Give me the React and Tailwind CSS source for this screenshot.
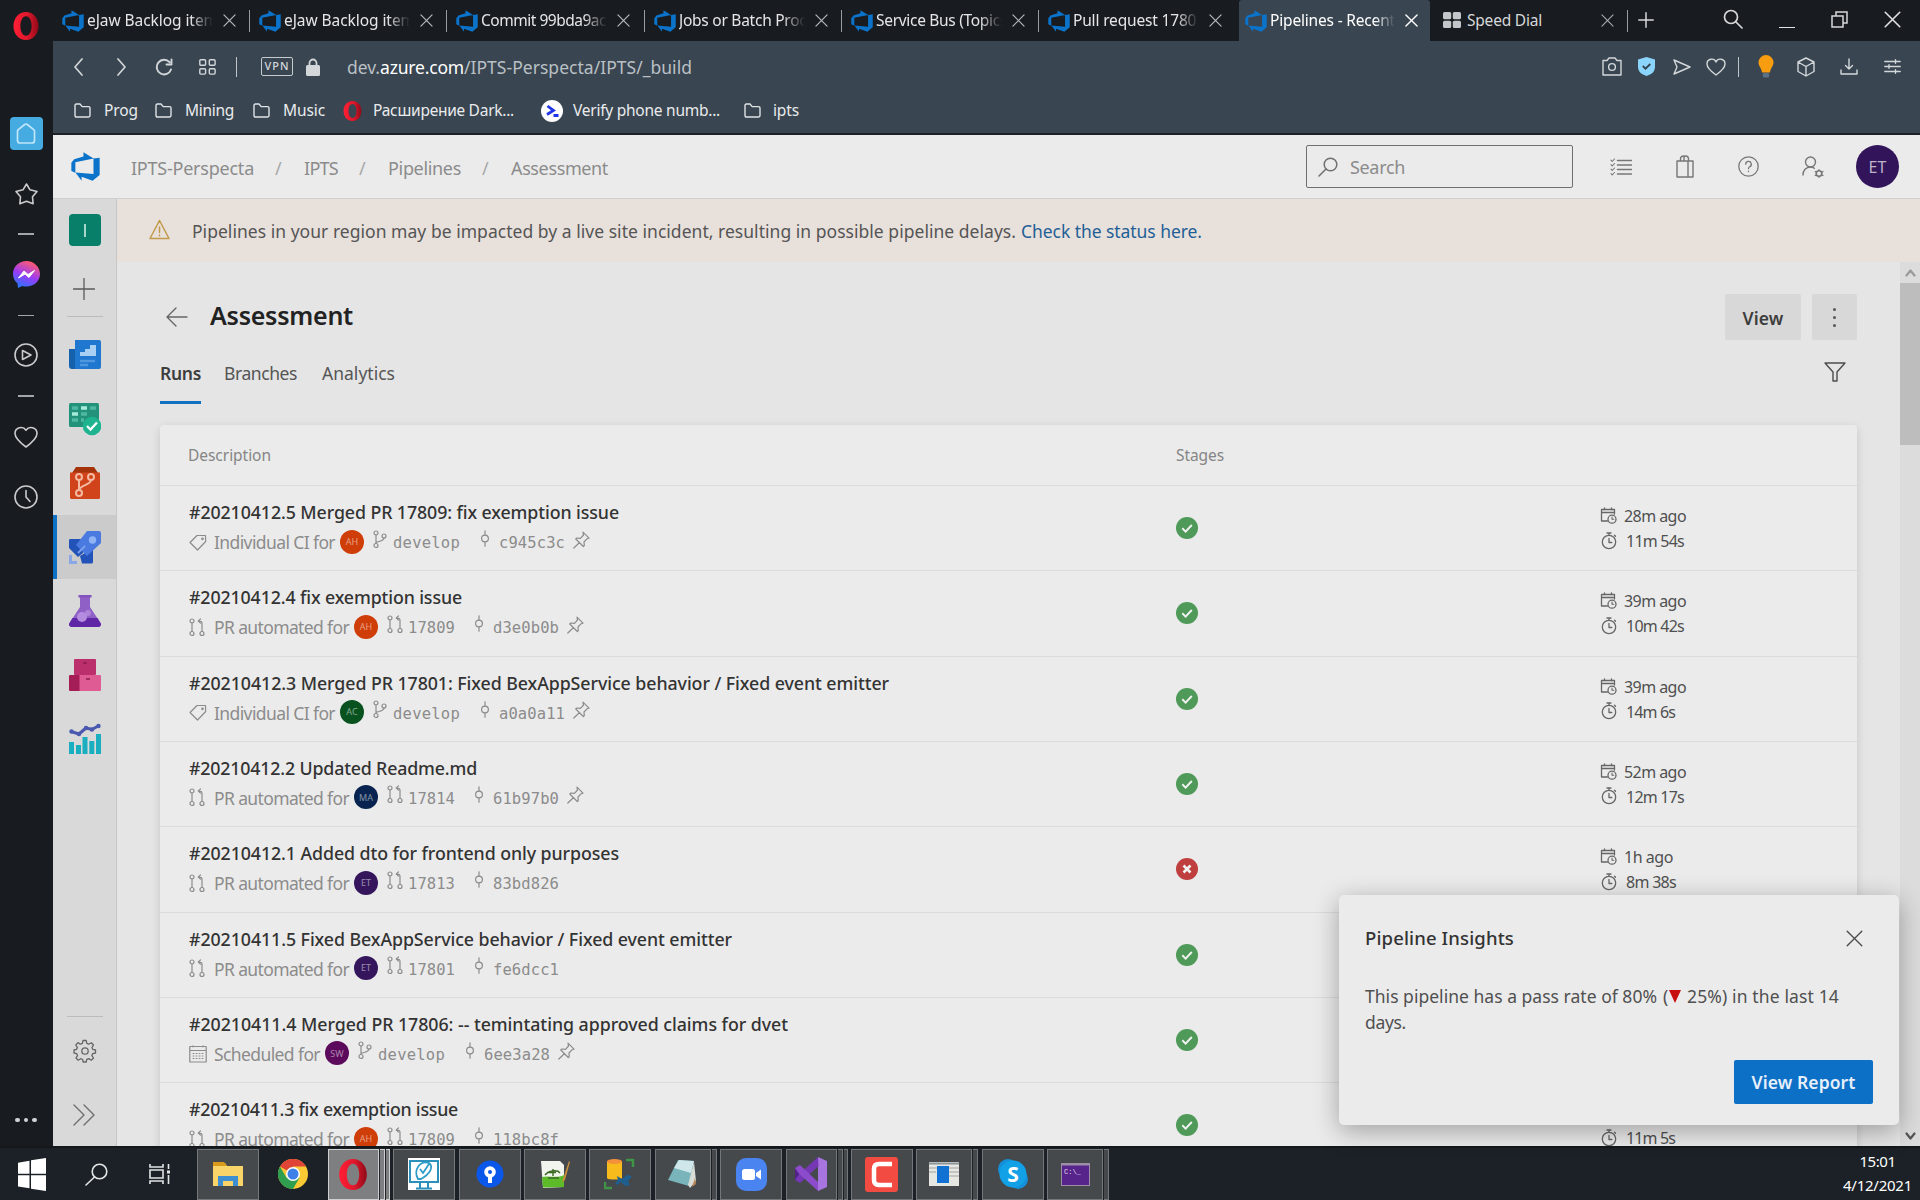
import React, { useLayoutEffect, useRef, useState } from "react";

const UI = "font-['Noto_Sans','Open_Sans',sans-serif]";

// Single-line text whose letter spacing is adjusted so that it fills `w` pixels.
function Fit({ w, className = "", children }) {
  const ref = useRef(null);
  const [ls, setLs] = useState(0);
  useLayoutEffect(() => {
    const el = ref.current;
    const natural = el.getBoundingClientRect().width - ls * children.length;
    setLs((w - natural) / children.length);
  }, [w, children]);
  return (
    <span className={"block shrink-0 whitespace-nowrap " + className} style={{ width: w }}>
      <span ref={ref} style={{ letterSpacing: ls }}>{children}</span>
    </span>
  );
}

function Icon({ size = 18, w, h, box = "0 0 24 24", sw = 1.5, className = "", children }) {
  return (
    <svg width={w || size} height={h || size} viewBox={box} fill="none" stroke="currentColor" strokeWidth={sw}
      strokeLinecap="round" strokeLinejoin="round" className={"block shrink-0 " + className}>
      {children}
    </svg>
  );
}

function DevOps({ size, className = "" }) {
  return (
    <svg width={size} height={size} viewBox="0.8 0.8 16.4 16.4" className={"block shrink-0 " + className}>
      <path fill="#0b73c9" d="M17,4v9.74l-4,3.28-6.2-2.26V17l-3.51-4.59,10.23.8V4.44Zm-3.41.49L7.85,1V3.29L2.58,4.84,1,6.87v4.61l2.26,1V6.57Z" />
    </svg>
  );
}

function OperaO({ w, h, className = "" }) {
  return (
    <svg width={w} height={h} viewBox="0 0 26 28" className={"block shrink-0 " + className}>
      <defs>
        <linearGradient id="opg" x1="0" x2="1"><stop offset="0" stopColor="#ff1f35" /><stop offset=".55" stopColor="#e0182c" /><stop offset="1" stopColor="#8e0a18" /></linearGradient>
      </defs>
      <path fill="url(#opg)" fillRule="evenodd" d="M13 0C5.800 0 .5 6 .5 14S5.800 28 13 28 25.500 22 25.500 14 20.200 0 13 0Zm0 4.200c3.600 0 5.600 4.600 5.600 9.800s-2 9.800-5.600 9.800S7.400 19.200 7.400 14 9.400 4.200 13 4.200Z" />
    </svg>
  );
}

function Cross({ size = 14, sw = 1.5, className = "" }) {
  return <Icon size={size} box="0 0 14 14" sw={sw} className={className}><path d="M1 1 13 13M13 1 1 13" /></Icon>;
}

function Folder() {
  return <Icon w={17} h={15} box="0 0 17 15" sw={1.4} className="text-[#dfe3e6]"><path d="M1 2.500C1 1.600 1.500 1 2.400 1H6l2.200 2.600h6.400c.9 0 1.400.5 1.400 1.400v7.600c0 .9-.5 1.400-1.400 1.400H2.400C1.500 14 1 13.500 1 12.600Z" /></Icon>;
}

const tabs = [
  ["eJaw Backlog item", 131, "w-[197px]"],
  ["eJaw Backlog item", 131, "w-[197px]"],
  ["Commit 99bda9ac", 125, "w-[198px]"],
  ["Jobs or Batch Proce", 136, "w-[197px]"],
  ["Service Bus (Topics", 131, "w-[197px]"],
  ["Pull request 17801", 132, "w-[200px]"],
];

function TabBar() {
  return (
    <div className="flex h-[41px] bg-[#181b1f]">
      {tabs.map(([label, w, width], i) => (
        <div key={i} className={"flex shrink-0 items-center pl-[9px] " + width}>
          <DevOps size={22} />
          <div className="ml-[3px] w-[126px] overflow-hidden [mask-image:linear-gradient(to_right,black_82%,transparent_100%)]">
            <Fit w={w} className="text-[15.500px] text-[#e4e6e8]">{label}</Fit>
          </div>
          <Cross size={13} sw={1.3} className="ml-[10px] text-[#b5b8bb]" />
          {i < 5 && <div className="ml-auto h-[22px] w-px bg-[#9a9da0]" />}
        </div>
      ))}
      <div className="flex w-[191px] shrink-0 items-center rounded-t-[3px] bg-[#394550] pl-[6px]">
        <DevOps size={22} />
        <div className="ml-[3px] w-[125px] overflow-hidden [mask-image:linear-gradient(to_right,black_84%,transparent_100%)]">
          <Fit w={125} className="text-[15.500px] text-white">Pipelines - Recent</Fit>
        </div>
        <Cross size={13} sw={1.5} className="ml-[10px] text-white" />
      </div>
      <div className="flex flex-1 items-center pl-[13px] text-[#d6d8da]">
        <svg width="18" height="16" viewBox="0 0 18 16" className="mb-[2px] block" fill="#c4c7c9"><rect width="8.200" height="7.200" rx="1.500" /><rect x="9.800" width="8.200" height="7.200" rx="1.500" /><rect y="8.800" width="8.200" height="7.200" rx="1.500" /><rect x="9.800" y="8.800" width="8.200" height="7.200" rx="1.500" /></svg>
        <Fit w={75} className="ml-[6px] text-[15.500px]">Speed Dial</Fit>
        <Cross size={13} sw={1.2} className="ml-[59px] text-[#a8abae]" />
        <div className="ml-[13px] h-[22px] w-px bg-[#9a9da0]" />
        <Icon size={16} box="0 0 16 16" sw={1.500} className="mb-[2px] ml-[10px]"><path d="M8 .8V15.200M.8 8H15.200" /></Icon>
        <Icon size={20} box="0 0 20 20" sw={1.700} className="mb-[4px] ml-[69px]"><circle cx="8" cy="8" r="6.500" /><path d="m13 13 6 6" /></Icon>
        <div className="mt-[14px] ml-[36px] h-[1.500px] w-[16px] bg-[#e0e2e4]" />
        <Icon size={17} box="0 0 17 17" sw={1.500} className="mb-[2px] ml-[36px]"><path strokeLinejoin="miter" d="M1 5H12V16H1ZM5 5V1H16V12H12" /></Icon>
        <Cross size={17} sw={1.300} className="mb-[2px] ml-[36px] text-[#e0e2e4]" />
      </div>
    </div>
  );
}

function AddressBar() {
  return (
    <div className="flex h-[51px] items-center pl-[20px] text-[#d3d7da]">
      <Icon w={11} h={18} box="0 0 11 18" sw={1.700}><path d="M9 1 2 9l7 8" /></Icon>
      <Icon w={11} h={18} box="0 0 11 18" sw={1.700} className="ml-[32px]"><path d="m2 1 7 8-7 8" /></Icon>
      <Icon size={18} box="0 0 18 18" sw={1.900} className="ml-[28px]"><path d="M16 11.500A7.300 7.300 0 1 1 14.500 4.200M16.500 1.500V6.500H11.500" /></Icon>
      <Icon w={17} h={16} box="0 0 17 16" sw={1.400} className="ml-[26px]"><rect x=".8" y=".8" width="5.800" height="5.400" rx="1" /><rect x="10.300" y=".8" width="5.800" height="5.400" rx="1" /><rect x=".8" y="9.700" width="5.800" height="5.400" rx="1" /><rect x="10.300" y="9.700" width="5.800" height="5.400" rx="1" /></Icon>
      <div className="ml-[20px] h-[20px] w-px bg-[#c0c5c9]" />
      <div className="ml-[24px] flex h-[19px] w-[32px] items-center justify-center rounded-[2px] border-[1.500px] border-[#c6cbce]">
        <Fit w={25} className="text-center text-[11px] font-medium">VPN</Fit>
      </div>
      <svg width="14" height="18" viewBox="0 0 14 18" className="ml-[13px] block"><rect y="7" width="14" height="11" rx="1.500" fill="#d3d7da" /><path d="M3.500 8V5a3.500 3.500 0 0 1 7 0v3" fill="none" stroke="#d3d7da" strokeWidth="1.800" /></svg>
      <div className="mt-[1px] ml-[27px] flex text-[17.500px] text-[#b9c0c5]">
        <Fit w={33}>dev.</Fit>
        <Fit w={84} className="text-white">azure.com</Fit>
        <Fit w={228}>/IPTS-Perspecta/IPTS/_build</Fit>
      </div>
      <div className="ml-auto flex items-center">
        <Icon w={20} h={19} box="0 0 20 19" sw={1.400}><path d="M1 3.500H5L7 1h6l2 2.500h4V18H1Z" /><circle cx="10" cy="10" r="3.400" /></Icon>
        <svg width="17" height="19" viewBox="0 0 17 19" className="ml-[16px] block"><path d="M8.500 0 17 2.500V10c0 4.500-3.500 7.500-8.500 9C3.500 17.500 0 14.500 0 10V2.500Z" fill="#8bd4fb" /><path d="m4.800 9 2.700 2.700L12.300 7" fill="none" stroke="#33424f" strokeWidth="1.800" /></svg>
        <Icon w={18} h={16} box="0 0 18 16" sw={1.400} className="ml-[18px]"><path d="M1 1 17 8 1 15 4 8Z" /></Icon>
        <Icon w={20} h={18} box="0 0 20 18" sw={1.400} className="ml-[15px]"><path d="M10 17C3 12 1 9 1 6a4.700 4.700 0 0 1 9-2 4.700 4.700 0 0 1 9 2c0 3-2 6-9 11Z" /></Icon>
        <div className="ml-[12px] h-[20px] w-px bg-[#c0c5c9]" />
        <svg width="16" height="24" viewBox="0 0 16 24" className="ml-[19px] block"><path d="M8 0a7.500 7.500 0 0 1 7.500 7.500c0 3.500-3 5.500-3.500 10H4c-.5-4.500-3.500-6.500-3.500-10A7.500 7.500 0 0 1 8 0Z" fill="#f79d0f" /><rect x="4.800" y="18" width="6.400" height="4.500" rx="1.500" fill="#5d7186" /></svg>
        <Icon w={18} h={20} box="0 0 18 20" sw={1.400} className="ml-[23px]"><path d="m9 1 8 4v9.500L9 19l-8-4.500V5ZM1 5l8 4.500L17 5M9 9.500V19" /></Icon>
        <Icon w={18} h={17} box="0 0 18 17" sw={1.400} className="ml-[25px]"><path d="M9 1v10M5.500 7.500 9 11l3.500-3.500M1 12v4h16v-4" /></Icon>
        <Icon w={17} h={15} box="0 0 17 15" sw={1.400} className="mr-[19px] ml-[26px]"><path d="M.8 2.500H16.200M.8 7.500H16.200M.8 12.500H16.200M11.500.8V4.200M5 5.800V9.200M11.500 10.800v3.400" /></Icon>
      </div>
    </div>
  );
}

function Bookmarks() {
  return (
    <div className="flex h-[43px] items-center border-b-2 border-[#1b2025] pb-[4px] pl-[21px] text-[15.500px] text-[#e9ebed]">
      <Folder /><Fit w={34} className="ml-[13px]">Prog</Fit>
      <div className="w-[17px]" /><Folder /><Fit w={49} className="ml-[13px]">Mining</Fit>
      <div className="w-[19px]" /><Folder /><Fit w={42} className="ml-[13px]">Music</Fit>
      <OperaO w={19} h={20} className="ml-[18px]" /><Fit w={141} className="ml-[11px]">Расширение Dark...</Fit>
      <svg width="22" height="22" viewBox="0 0 22 22" className="ml-[27px] block"><circle cx="11" cy="11" r="11" fill="#fff" /><path d="m6.500 6 6 4.500-6.500 4M12.500 15.500h5" fill="none" stroke="#1f35e8" strokeWidth="2.800" /></svg>
      <Fit w={147} className="ml-[10px]">Verify phone numb...</Fit>
      <div className="w-[24px]" /><Folder /><Fit w={26} className="ml-[12px]">ipts</Fit>
    </div>
  );
}

function OperaSidebar() {
  const dash = "h-[1.500px] w-[16px] bg-[#a4a7aa]";
  return (
    <div className="flex w-[53px] shrink-0 flex-col items-center bg-[#181b1f] pr-[1px] text-[#c9cbcd]">
      <OperaO w={26} h={28} className="mt-[12px]" />
      <div className="mt-[77px] flex size-[33px] items-center justify-center rounded-[4px] bg-[#45abe1] text-[#bfe6fa]">
        <Icon w={20} h={21} box="0 0 20 21" sw={1.700}><path d="M1.500 8.500Q1.500 7.500 2.300 6.700L8.700 1.500Q10 .5 11.300 1.500L17.700 6.700Q18.500 7.500 18.500 8.500V17.500Q18.500 20 16 20H4Q1.500 20 1.500 17.500Z" /></Icon>
      </div>
      <Icon w={23} h={22} box="0 0 23 22" sw={1.600} className="mt-[33px]"><path d="M11.500 1 15 6.800l7 1.700-4.500 5.300.6 7-6.600-2.600-6.600 2.600.6-7L1 8.500l7-1.700Z" /></Icon>
      <div className={dash + " mt-[28px]"} />
      <svg width="27" height="27" viewBox="0 0 27 27" className="mt-[26px] block">
        <defs><linearGradient id="msg" x1="0.200" y1="1" x2="0.600" y2="0"><stop offset="0" stopColor="#1f7bff" /><stop offset=".5" stopColor="#9a3bf5" /><stop offset="1" stopColor="#ff5b70" /></linearGradient></defs>
        <path d="M13.500 0C6 0 0 5.500 0 13c0 4 1.600 7 4.500 9.500L5 27l4.200-2c1.400.4 2.800.6 4.300.6C21 25.600 27 20 27 13S21 0 13.500 0Z" fill="url(#msg)" />
        <path d="m5.500 17 5.500-7 4 3.500 6.500-4-5.500 7-4-3.500Z" fill="#fff" stroke="#fff" />
      </svg>
      <div className={dash + " mt-[27px]"} />
      <Icon size={24} box="0 0 24 24" sw={1.600} className="mt-[27px]"><circle cx="12" cy="12" r="11" /><path d="M8.500 7.500 17 12l-8.500 4.500Z" /></Icon>
      <div className={dash + " mt-[28px]"} />
      <Icon w={24} h={22} box="0 0 24 22" sw={1.600} className="mt-[29px]"><path d="M12 21C4 15 1 11.500 1 7.500a6 6 0 0 1 11-3.300A6 6 0 0 1 23 7.500C23 11.500 20 15 12 21Z" /></Icon>
      <Icon size={24} box="0 0 24 24" sw={1.600} className="mt-[37px]"><circle cx="12" cy="12" r="11" /><path d="M12 5.500V12l4 4.500" /></Icon>
      <div className="mt-auto mb-[24px] flex gap-[4px]">
        <i className="size-[4.500px] rounded-full bg-[#d0d2d4]" /><i className="size-[4.500px] rounded-full bg-[#d0d2d4]" /><i className="size-[4.500px] rounded-full bg-[#d0d2d4]" />
      </div>
    </div>
  );
}

function Header() {
  return (
    <div className="flex h-[64px] shrink-0 items-center border-b border-[#cfcfcf] bg-[#ebebeb] pl-[18px] text-[18px] text-[#8b8b8b]">
      <DevOps size={29} />
      <div className="mt-[3px] ml-[31px] flex">
        <Fit w={123}>IPTS-Perspecta</Fit>
        <span className="ml-[21px] w-[29px] text-[#a8a8a8]">/</span>
        <Fit w={34}>IPTS</Fit>
        <span className="ml-[21px] w-[29px] text-[#a8a8a8]">/</span>
        <Fit w={73}>Pipelines</Fit>
        <span className="ml-[21px] w-[29px] text-[#a8a8a8]">/</span>
        <Fit w={97}>Assessment</Fit>
      </div>
      <div className="ml-auto flex h-[43px] w-[267px] items-center rounded-[2px] border-[1.500px] border-[#6f6f6f] pl-[11px]">
        <Icon size={20} box="0 0 20 20" sw={1.500} className="text-[#6f6f6f]"><circle cx="12.500" cy="7.500" r="6.300" /><path d="M8 12 1 19" /></Icon>
        <Fit w={55} className="mt-[2px] ml-[12px]">Search</Fit>
      </div>
      <Icon w={22} h={18} box="0 0 22 18" sw={1.500} className="ml-[37px] text-[#777]"><path d="M7.500 2.500h14M7.500 7h14M7.500 11.500h14M7.500 16h14" /><path strokeWidth="1.100" d="m1 2.200 1.200 1.300L4.500 1M1 6.700 2.200 8l2.300-2.500M1 11.200l1.200 1.300L4.500 10M1 15.700 2.200 17l2.300-2.500" /></Icon>
      <Icon w={18} h={23} box="0 0 18 23" sw={1.400} className="ml-[44px] text-[#777]"><path d="M1 6h16v16H1ZM12 6v16M4.500 6V4Q4.500 1 8 1M8 6V3.500Q8 1 10 1T12.500 3.500V6" /></Icon>
      <Icon size={21} box="0 0 21 21" sw={1.300} className="ml-[44px] text-[#777]"><circle cx="10.500" cy="10.500" r="9.700" /><path d="M7.700 8.200a2.800 2.800 0 1 1 4 2.500c-.9.500-1.200 1-1.200 2M10.500 15.200v.3" /></Icon>
      <Icon w={22} h={22} box="0 0 22 22" sw={1.400} className="ml-[43px] text-[#777]"><circle cx="8.500" cy="6" r="5" /><path d="M1 19c0-4.500 3-8 7.500-8 1.500 0 2.800.4 3.800 1.200" /><circle cx="17" cy="17.500" r="2.800" strokeWidth="1.600" /><path strokeWidth="1.200" d="M17 13.500v1M17 20.500v1M13.200 15.500l1 .5M20 19l1 .5M13.200 19.500l1-.5M20 16l1-.5" /></Icon>
      <div className="mr-[21px] ml-[32px] flex size-[43px] items-center justify-center rounded-full bg-[#32145a] text-[#bdb3ca]">
        <Fit w={18} className="text-[16px]">ET</Fit>
      </div>
    </div>
  );
}

const navIcons = [
  <g key="o"><path d="M0 10h8v20H3a3 3 0 0 1-3-3Z" fill="#1661ab" /><path d="M6 1h24a2 2 0 0 1 2 2v25a2 2 0 0 1-2 2H6Z" fill="#1f77cf" /><path d="M11 17V13h5v-3h5V6h6v11Z" fill="#a9d0f2" /><path d="M11 22h15M11 26h8" stroke="#4f97de" strokeWidth="2.500" /></g>,
  <g key="b"><rect x="0" y="0" width="30" height="24" rx="1.500" fill="#23927b" /><path d="M3 5h6M21 5h6M3 17h6M12 11h6M12 17h3" stroke="#4fb8a2" strokeWidth="3.500" /><path d="M12 5h6M3 11h6" stroke="#a6ead9" strokeWidth="3.500" /><circle cx="23" cy="23" r="9.300" fill="#1fb48f" /><path d="m18 23 3.500 3.500L28 19.500" stroke="#fff" strokeWidth="2.300" fill="none" /></g>,
  <g key="r"><path d="M7 0h18l4 6H3Z" fill="#a5330a" /><path d="M1 5.500h30V30.500a1.500 1.500 0 0 1-1.500 1.500h-27A1.500 1.500 0 0 1 1 30.500Z" fill="#d0431b" /><g fill="none" stroke="#f3b9a1" strokeWidth="2"><circle cx="10" cy="10" r="3" /><circle cx="22" cy="10" r="3" /><circle cx="10" cy="26" r="3" /><path d="M10 13v10M22 13c0 5-11 5-12 10" /></g></g>,
  <g key="p"><path d="M1 8h13v14l-5 4-9-9V9.500A1.500 1.500 0 0 1 1 8ZM24 17v14a1.500 1.500 0 0 1-1.500 1.500H13L11 25Z" fill="#2353b8" /><path d="M18 0h12a2 2 0 0 1 2 2v10L18 25 7 14Z" fill="#4a7ae0" /><circle cx="23.500" cy="9" r="3.700" fill="#8fb3f5" /><path d="m9 22 7-7" stroke="#7da1ee" strokeWidth="1.800" /><path d="m2 20 9 9-3 .5-6-6Z" fill="#cbcbcb" /><path d="M1.500 24v7.500H8" stroke="#8aa8e8" strokeWidth="3" fill="none" /></g>,
  <g key="t"><path d="M11 2h10v10l10.500 16a2.500 2.500 0 0 1-2 4H2.500a2.500 2.500 0 0 1-2-4L11 12Z" fill="#8f60c6" /><path d="M3.500 23h25l3 5a2.500 2.500 0 0 1-2 4H2.500a2.500 2.500 0 0 1-2-4Z" fill="#5f26a6" /><path d="M9.500 0h13v2.500h-13Z" fill="#8353bd" /><circle cx="13" cy="22" r="5" fill="#b58de0" /><circle cx="19" cy="18" r="3" fill="#b58de0" opacity=".8" /></g>,
  <g key="a"><rect x="5" y="0" width="22" height="16" rx="1" fill="#bb2f6d" /><path d="M0 17a1 1 0 0 1 1-1h10v16H1a1 1 0 0 1-1-1Z" fill="#a51d57" /><path d="M10.500 16H31a1 1 0 0 1 1 1v14a1 1 0 0 1-1 1H10.500Z" fill="#df5b94" /><path d="M14 4h4M17 20h4" stroke="#8f1c4d" strokeWidth="1.600" /></g>,
  <g key="n"><path d="m2 8.500 8 2.500 7-6 6 1.500L30 2.500" stroke="#4a58b0" strokeWidth="3" fill="none" /><g fill="#4a58b0"><circle cx="2.500" cy="8.500" r="2.200" /><circle cx="10" cy="11" r="2.200" /><circle cx="17" cy="5" r="2.200" /><circle cx="23" cy="6.500" r="2.200" /><circle cx="29.500" cy="3" r="2.200" /></g><path d="M0 19h5v12H0ZM7 22h5v9H7ZM13.500 14h5v17h-5ZM20.300 18h5v13h-5ZM27 11h5v20h-5Z" fill="#1aafc0" /></g>,
];

function LeftNav() {
  return (
    <div className="flex w-[64px] shrink-0 flex-col border-r border-[#c6c6c6] bg-[#d9d9d9]">
      <div className="mt-[15px] ml-[16px] flex size-[32px] items-center justify-center rounded-[4px] bg-[#087f68]">
        <div className="h-[13px] w-[1.500px] bg-[#a7d6cb]" />
      </div>
      <Icon size={22} box="0 0 22 22" sw={1.300} className="mt-[32px] ml-[20px] text-[#5a5a5a]"><path d="M11 .5v21M.5 11h21" /></Icon>
      <div className="mt-[16px] ml-[14px] h-px w-[36px] bg-[#bcbcbc]" />
      <div className="mt-[6px] flex flex-col">
        {navIcons.map((icon, i) => (
          <div key={i} className={"flex h-[64px] items-center " + (i === 3 ? "border-l-4 border-[#0e72c4] bg-[#cbcbcb] pl-[12px]" : "pl-[16px]")}>
            <svg width="32" height="33" viewBox="0 0 32 33" className="block">{icon}</svg>
          </div>
        ))}
      </div>
      <div className="mt-auto ml-[14px] h-px w-[36px] bg-[#bcbcbc]" />
      <Icon size={24} box="0 0 24 24" sw={1.300} className="mt-[22px] ml-[20px] text-[#666]"><circle cx="12" cy="12" r="3.200" /><path d="m10 1.500-.6 2.900-2 .8L5 3.600 2.800 6l1.500 2.400-.8 2-2.500.6v3l2.700.6.8 2L3 19l2.200 2.200 2.400-1.500 2 .8.600 2.500h3l.6-2.600 2-.8 2.500 1.600 2.200-2.200-1.600-2.400.8-2L22.500 14v-3l-2.700-.6-.8-2L20.500 6l-2.200-2.300-2.500 1.500-2-.8-.6-2.900Z" /></Icon>
      <Icon w={22} h={22} box="0 0 22 22" sw={1.400} className="mt-[41px] mb-[20px] ml-[20px] text-[#6f6f6f]"><path d="m1 1 10 10L1 21M11 1l10 10-10 10" /></Icon>
    </div>
  );
}

const glyphs = {
  tag: <Icon w={18} h={17} box="0 0 18 17" sw={1.200}><path d="M1 8.500 8 1.500h8.500l.2 6L8.500 16Z" /><circle cx="13.500" cy="4.800" r=".8" /></Icon>,
  pr: <Icon w={16} h={19} box="0 0 16 19" sw={1.200}><circle cx="3" cy="3" r="2" /><circle cx="3" cy="15.500" r="2" /><circle cx="13" cy="15.500" r="2" /><path d="M3 5v8.500M13 13.500V5.500c0-1.800-1-2.500-3.500-2.500M11.500.8 9.300 3l2.200 2.200" /></Icon>,
  branch: <Icon w={14} h={19} box="0 0 14 19" sw={1.200}><circle cx="3" cy="3" r="2" /><circle cx="3" cy="15.500" r="2" /><circle cx="11" cy="6" r="2" /><path d="M3 5v8.500M11 8c0 3-4 3-8 4.500" /></Icon>,
  commit: <Icon w={10} h={17} box="0 0 10 17" sw={1.200}><path d="M5 .8V5M5 12v4.200" /><circle cx="5" cy="8.500" r="3.400" /></Icon>,
  pin: <Icon w={17} h={18} box="0 0 17 18" sw={1.200}><path d="m10 1.200 6 6-2 .6-3 3.200.3 3.500-1 1L2.800 8l1-1 3.700.3L10.500 4ZM6.300 11.700.8 17" /></Icon>,
  calendar: <Icon w={18} h={18} box="0 0 18 18" sw={1.200}><path d="M.8 1.500h16.400V17H.8ZM.8 5.500h16.400M4 .8v1M14 .8v1" /><path strokeWidth="1" strokeDasharray="1 2" d="M4 8.500h11M4 11h11M4 13.500h11" /></Icon>,
};

const CI = ["tag", "Individual CI for", 121];
const PR = ["pr", "PR automated for", 135];
const AH = ["AH", "bg-[#cf3d08]"];
const ET = ["ET", "bg-[#35165c]"];

const runs = [
  { title: "#20210412.5 Merged PR 17809: fix exemption issue", w: 430, kind: CI, who: AH, ref: "develop", hash: "c945c3c", pin: true, ago: ["28m ago", 62], took: ["11m 54s", 58] },
  { title: "#20210412.4 fix exemption issue", w: 273, kind: PR, who: AH, ref: "17809", hash: "d3e0b0b", pin: true, ago: ["39m ago", 62], took: ["10m 42s", 58] },
  { title: "#20210412.3 Merged PR 17801: Fixed BexAppService behavior / Fixed event emitter", w: 700, kind: CI, who: ["AC", "bg-[#07521f]"], ref: "develop", hash: "a0a0a11", pin: true, ago: ["39m ago", 62], took: ["14m 6s", 49] },
  { title: "#20210412.2 Updated Readme.md", w: 288, kind: PR, who: ["MA", "bg-[#08234f]"], ref: "17814", hash: "61b97b0", pin: true, ago: ["52m ago", 62], took: ["12m 17s", 58] },
  { title: "#20210412.1 Added dto for frontend only purposes", w: 430, kind: PR, who: ET, ref: "17813", hash: "83bd826", fail: true, ago: ["1h ago", 49], took: ["8m 38s", 50] },
  { title: "#20210411.5 Fixed BexAppService behavior / Fixed event emitter", w: 543, kind: PR, who: ET, ref: "17801", hash: "fe6dcc1", ago: ["1h ago", 49], took: ["9m 12s", 50] },
  { title: "#20210411.4 Merged PR 17806: -- temintating approved claims for dvet", w: 599, kind: ["calendar", "Scheduled for", 106], who: ["SW", "bg-[#5c0a5c]"], ref: "develop", hash: "6ee3a28", pin: true, ago: ["9h ago", 49], took: ["12m 3s", 49] },
  { title: "#20210411.3 fix exemption issue", w: 269, kind: PR, who: AH, ref: "17809", hash: "118bc8f", ago: ["21h ago", 56], took: ["11m 5s", 49] },
];

function RunRow({ run, last }) {
  const mono = "font-['DejaVu_Sans_Mono',monospace] text-[15.500px] leading-[24px]";
  const branch = run.ref === "develop";
  return (
    <div className={"flex h-[85.330px] shrink-0 pl-[29px] " + (last ? "" : "border-b-[1.500px] border-[#dbdbdb]")}>
      <div className="w-[987px] shrink-0 pt-[14px]">
        <Fit w={run.w} className="text-[17.800px] leading-[24px] font-medium text-[#333]">{run.title}</Fit>
        <div className="mt-[6px] flex h-[24px] items-center text-[#8c8c8c]">
          <div className="w-[18px]">{glyphs[run.kind[0]]}</div>
          <Fit w={run.kind[2]} className="ml-[7px] text-[17.500px] leading-[24px]">{run.kind[1]}</Fit>
          <div className={"mb-[1px] ml-[5px] flex size-[24px] shrink-0 items-center justify-center rounded-full text-[9px] text-white/50 " + run.who[1]}>{run.who[0]}</div>
          <div className="mb-[6px] ml-[9px]">{branch ? glyphs.branch : glyphs.pr}</div>
          <Fit w={branch ? 67 : 47} className={"mt-[2px] " + (branch ? "ml-[6px] " : "ml-[5px] ") + mono}>{run.ref}</Fit>
          <div className={"mb-[7px] " + (branch ? "ml-[20px]" : "ml-[19px]")}>{glyphs.commit}</div>
          <Fit w={66} className={"mt-[2px] ml-[9px] " + mono}>{run.hash}</Fit>
          {run.pin && <div className="mb-[5px] ml-[8px]">{glyphs.pin}</div>}
        </div>
      </div>
      <svg width="22" height="22" viewBox="0 0 22 22" className="mt-[31px] block shrink-0">
        <circle cx="11" cy="11" r="11" fill={run.fail ? "#bf3f3f" : "#4f9a58"} />
        <path d={run.fail ? "m7.500 7.500 7 7m0-7-7 7" : "m6.300 11.300 3.300 3.300 6.200-6.600"} fill="none" stroke="#f2f2f2" strokeWidth={run.fail ? 2.600 : 2} />
      </svg>
      <div className="ml-[402px] pt-[18px] text-[16px] leading-[25px] text-[#505050]">
        <div className="flex h-[25px] items-center">
          <Icon size={17} box="0 0 17 17" sw={1.300} className="mb-[2px] text-[#666]"><path d="M7.500 14H1.500V2.500h13V7M1.500 5.500h13M4.500.8v2M11.500.8v2" /><circle cx="12" cy="12.200" r="4" /><path strokeWidth="1.100" d="M12 10v2.300h1.800" /></Icon>
          <Fit w={run.ago[1]} className="ml-[7px]">{run.ago[0]}</Fit>
        </div>
        <div className="flex h-[25px] items-center">
          <Icon w={16} h={18} box="0 0 16 18" sw={1.300} className="mb-[2px] ml-[1px] text-[#666]"><circle cx="8" cy="10" r="6.700" /><path d="M8 6.500V10.500h2.800M6 1h4M8 1v2M13.500 3.200l1 1" /></Icon>
          <Fit w={run.took[1]} className="ml-[9px]">{run.took[0]}</Fit>
        </div>
      </div>
    </div>
  );
}

function Main() {
  return (
    <div className="flex min-w-0 flex-1 flex-col bg-[#e5e5e5]">
      <div className="flex h-[63px] shrink-0 items-center bg-[#e8e0db] pl-[32px] text-[17.500px]">
        <Icon size={21} box="0 0 21 21" sw={1.500} className="mb-[2px] text-[#c29a4b]"><path d="M10.500 1.500 20 19.500H1ZM10.500 8v5.500M10.500 16v.8" /></Icon>
        <Fit w={824} className="mt-[1px] ml-[22px] text-[#555]">Pipelines in your region may be impacted by a live site incident, resulting in possible pipeline delays.</Fit>
        <Fit w={181} className="mt-[1px] ml-[5px] text-[#1f5f96]">Check the status here.</Fit>
      </div>
      <div className="flex h-[884px] shrink-0">
        <div className="flex flex-1 flex-col overflow-hidden pl-[43px]">
          <div className="mt-[32px] flex h-[46px] items-center pr-[43px]">
            <Icon w={22} h={20} box="0 0 22 20" sw={1.400} className="ml-[6px] text-[#666]"><path d="M21 10H1M10 1 1 10l9 9" /></Icon>
            <Fit w={143} className="mb-[4px] ml-[22px] text-[25px] leading-none font-semibold text-[#222]">Assessment</Fit>
            <div className="ml-auto flex h-[46px] w-[76px] items-center justify-center rounded-[2px] bg-[#d8d8d8]">
              <Fit w={41} className="mt-[3px] text-[17.500px] font-semibold text-[#3d3d3d]">View</Fit>
            </div>
            <div className="ml-[11px] flex h-[46px] w-[45px] flex-col items-center justify-center gap-[5px] rounded-[2px] bg-[#d8d8d8]">
              <i className="size-[3px] rounded-full bg-[#555]" /><i className="size-[3px] rounded-full bg-[#555]" /><i className="size-[3px] rounded-full bg-[#555]" />
            </div>
          </div>
          <div className="mt-[16px] flex h-[48px] text-[17.500px] leading-[34px] text-[#555]">
            <div className="flex h-[48px] w-[41px] flex-col justify-between border-b-[3px] border-[#1271c0] font-semibold text-[#3d3d3d]"><Fit w={41}>Runs</Fit></div>
            <Fit w={73} className="ml-[23px]">Branches</Fit>
            <Fit w={73} className="ml-[25px]">Analytics</Fit>
            <Icon w={22} h={20} box="0 0 22 20" sw={1.400} className="mt-[6px] mr-[54px] ml-auto text-[#4c4c4c]"><path d="M1 1h20l-8 9v9H9v-9Z" /></Icon>
          </div>
          <div className="mt-[21px] flex w-[1697px] shrink-0 flex-col rounded-t-[4px] bg-[#ebebeb] shadow-[0_3px_10px_rgba(0,0,0,0.14)]">
            <div className="flex h-[61px] shrink-0 items-center border-b-[1.500px] border-[#dbdbdb] pt-[1px] pl-[28px] text-[15.500px] text-[#858585]">
              <Fit w={83}>Description</Fit>
              <Fit w={48} className="ml-[905px]">Stages</Fit>
            </div>
            {runs.map((run, i) => <RunRow key={i} run={run} last={i === 7} />)}
          </div>
        </div>
        <div className="flex w-[20px] shrink-0 flex-col items-center justify-between bg-[#dcdcdc] text-[#9a9a9a]">
          <div>
            <div className="flex h-[21px] w-[20px] items-center justify-center"><Icon w={11} h={8} box="0 0 11 8" sw={2.200}><path d="m1.500 6.500 4-5 4 5" /></Icon></div>
            <div className="h-[162px] w-[20px] bg-[#bdbdbd]" />
          </div>
          <div className="flex h-[20px] items-center text-[#555]"><Icon w={11} h={8} box="0 0 11 8" sw={2.200}><path d="m1.500 1.500 4 5 4-5" /></Icon></div>
        </div>
      </div>
    </div>
  );
}

function Insights() {
  return (
    <div className="absolute top-[895px] left-[1339px] flex h-[230px] w-[560px] flex-col rounded-[5px] bg-[#ebebeb] px-[26px] shadow-[0_6px_26px_rgba(0,0,0,0.32)]">
      <div className="mt-[29px] flex h-[28px] items-center justify-between">
        <Fit w={149} className="text-[18.500px] font-medium text-[#333]">Pipeline Insights</Fit>
        <Cross size={17} sw={1.100} className="mr-[10px] text-[#4a4a4a]" />
      </div>
      <div className="mt-[32px] text-[17.500px] leading-[25.500px] text-[#505050]">
        <div className="flex items-center">
          <Fit w={292}>This pipeline has a pass rate of 80%</Fit>
          <Fit w={6} className="ml-[6px]">(</Fit>
          <svg width="12" height="13" viewBox="0 0 12 13" className="block"><path d="M0 0h12L6 13Z" fill="#c80f0f" /></svg>
          <Fit w={152} className="ml-[6px]">25%) in the last 14</Fit>
        </div>
        <Fit w={41}>days.</Fit>
      </div>
      <div className="mt-auto mb-[21px] flex h-[44px] w-[139px] items-center justify-center self-end rounded-[2px] bg-[#0c70c6]">
        <Fit w={104} className="mt-[1px] text-[17.500px] font-semibold text-[#e6effa]">View Report</Fit>
      </div>
    </div>
  );
}

function Task({ stack = 0, active, children }) {
  const tone = active ? "border-[#cfcfcf] bg-[#7d7f80]" : "border-[#73777a] bg-[#45494c]";
  return (
    <div className="flex w-[65.400px] shrink-0">
      <div className="flex w-[62px]">
        <div className={"flex h-[51px] flex-1 items-center justify-center border " + tone}>{children}</div>
        {stack > 0 && <div className={"ml-[1px] h-[51px] w-[5px] border border-l-0 " + tone} />}
        {stack > 1 && <div className={"ml-[1px] h-[51px] w-[4px] border border-l-0 " + tone} />}
      </div>
    </div>
  );
}

function Pic({ w = 32, h = 32, box = "0 0 32 32", children }) {
  return <svg width={w} height={h} viewBox={box} fill="none" className="block shrink-0">{children}</svg>;
}

function Taskbar() {
  return (
    <div className="flex h-[54px] shrink-0 items-center border-t-2 border-[#14181b] bg-[#1b2126]">
      <svg width="28" height="33" viewBox="0 0 28 28" preserveAspectRatio="none" className="ml-[18px] block" fill="#fff"><path d="M0 4 11.500 2.300V13.300H0ZM13 2 28 0v13.300H13ZM0 14.700h11.500v11L0 24.200ZM13 14.700h15V28l-15-2Z" /></svg>
      <Icon size={23} box="0 0 23 23" sw={1.600} className="ml-[39px] text-[#e3e5e6]"><circle cx="14.500" cy="8.500" r="7.300" /><path d="M9.500 14 1 22" /></Icon>
      <Icon w={22} h={22} box="0 0 22 22" sw={1.600} className="ml-[41px] text-[#e3e5e6]"><path strokeLinecap="butt" strokeLinejoin="miter" d="M1 1v3h13V1M1 7h13v8H1ZM1 21v-3h13v3M19.500 1v5M19.500 12v9" /><rect x="18" y="7.500" width="3" height="3" fill="currentColor" stroke="none" /></Icon>
      <div className="ml-[26px] flex items-center">
        <Task>
          <Pic><path d="M1 5h12l2 3h16v20H1Z" fill="#f9d468" /><path d="M1 4h11l3 4H1Z" fill="#d99a1b" /><path d="M6 28V18h20v10h-5v-5H11v5Z" fill="#3d8fd1" /></Pic>
        </Task>
        <div className="flex w-[65.400px] items-center justify-center pr-[4px]">
          <Pic w={30} h={30} box="0 0 30 30"><circle cx="15" cy="15" r="15" fill="#fbc934" /><path d="M15 15 2 7.500A15 15 0 0 1 28 7.500H15Z" fill="#df4436" /><path d="M2 7.500A15 15 0 0 0 15 30l6.500-11.300L15 15l-6.500 3.700Z" fill="#2f9e4f" /><circle cx="15" cy="15" r="7" fill="#fff" /><circle cx="15" cy="15" r="5.500" fill="#3f7fe8" /></Pic>
        </div>
        <Task stack={2} active><OperaO w={30} h={31} /></Task>
        <Task>
          <Pic><rect width="32" height="32" fill="#fff" /><path d="M2 3h28v21H2ZM12 24v6M20 24v6M8 30.500h16" stroke="#2b91bb" strokeWidth="2" /><path d="M10 21C5 12 12 2 21 5c5 4 1 11-8 16ZM12 11l3 4 6-9" stroke="#2f9cc8" strokeWidth="1.800" /></Pic>
        </Task>
        <Task>
          <Pic><circle cx="16" cy="16" r="13.500" fill="#0b57ea" /><circle cx="16" cy="14" r="5.800" fill="#fff" /><circle cx="16" cy="14" r="2" fill="#0b57ea" /><path d="M14 17h4v8h-4Z" fill="#fff" /></Pic>
        </Task>
        <Task>
          <Pic><path d="M2 3h19l4 4v22L4 30Z" fill="#f2f5ee" /><path d="M3 19c7-2 14 2 22-2v12L4 29.500Z" fill="#5dbb2a" /><path d="M6 17c3-4 12-6 15-2M8 14.500h9M14 11v7M9 20h11" stroke="#3b6b23" strokeWidth="1.400" /><path d="M30 3 24 21l-1 4 3-3 5-18Z" fill="#c78e3b" /></Pic>
        </Task>
        <Task>
          <Pic><path d="M3 3v17c0 2 15 2 15 0V3Z" fill="#f7bb1c" /><ellipse cx="10.500" cy="3.500" rx="7.500" ry="2.500" fill="#f3913b" /><path d="m13 18 5 3 5-4 5 1-4 5 2 4-5 1-4-4-4 3-2-2 3-3Z" fill="#1f5f8f" /><path d="M22 2h7v7M1 24v6h7" stroke="#3f9446" strokeWidth="2.500" /></Pic>
        </Task>
        <Task stack={1}>
          <Pic><path d="M11 2 27 3l-5 25L1 22Z" fill="#79b4ba" /><path d="M12 2 27 3l-3 12L7 10Z" fill="#cfe7ea" /><path d="m27 4 2 19-6 7-2-3Z" fill="#d8dcd6" /><path d="m28 20 1 6-4 3Z" fill="#b88755" /></Pic>
        </Task>
        <Task>
          <Pic w={31} h={33} box="0 0 31 33"><rect width="31" height="33" rx="10" fill="#4a84f0" /><rect x="6" y="11" width="13" height="11" rx="2.500" fill="#fff" /><path d="m20 15 5-3.500v10L20 18Z" fill="#fff" /></Pic>
        </Task>
        <Task stack={2}>
          <Pic w={32} h={34} box="0 0 32 34"><path d="M23 0 32 4v26l-9 4Z" fill="#a774e0" /><path d="m23 0 .5 9L5 26l-5-3v-2Z" fill="#7637b5" /><path d="M0 11 5 8l18 17v9L0 13Z" fill="#8b4bcb" /><path d="M0 11v12l4-6Z" fill="#52218a" /></Pic>
        </Task>
        <Task>
          <Pic w={33} h={35} box="0 0 33 35"><rect width="33" height="35" rx="3" fill="#f24b41" /><path d="M27 7H14Q9 7 9 12v11q0 5 5 5h13" stroke="#fff" strokeWidth="4.500" /></Pic>
        </Task>
        <Task stack={1}>
          <Pic w={30} h={24} box="0 0 30 24"><rect width="30" height="24" fill="#e6e6e2" /><path d="M0 1.500h30" stroke="#8b9298" strokeWidth="2" /><path d="M0 6h30M20 10h10M20 14h10M0 10h7" stroke="#b9b9b9" strokeWidth="1.500" /><rect x="8" y="4" width="12" height="17" fill="#1272d4" /></Pic>
        </Task>
        <Task>
          <Pic><circle cx="11" cy="11" r="10" fill="#1490d8" /><circle cx="21" cy="21" r="10" fill="#1490d8" /><circle cx="16" cy="16" r="13.500" fill="#12a0e6" /><text x="16" y="23.500" textAnchor="middle" fontSize="21" fontWeight="700" fill="#fff" className={UI}>S</text></Pic>
        </Task>
        <Task stack={1}>
          <Pic w={29} h={23} box="0 0 29 23"><rect width="29" height="23" fill="#9b8fa8" /><rect x="1" y="2.500" width="27" height="19.500" fill="#56248a" /><text x="3" y="11" fontSize="7" fill="#e6def0" className="font-['Liberation_Mono',monospace]">C:\_</text></Pic>
        </Task>
      </div>
      <div className="mr-[8px] mb-[3px] ml-auto flex flex-col items-center text-[15px] leading-[24px] text-white">
        <Fit w={36}>15:01</Fit>
        <Fit w={69}>4/12/2021</Fit>
      </div>
    </div>
  );
}

export default function App() {
  return (
    <div className={"relative flex h-[1200px] w-[1920px] flex-col overflow-hidden " + UI}>
      <div className="flex h-[1146px] shrink-0">
        <OperaSidebar />
        <div className="flex min-w-0 flex-1 flex-col overflow-hidden">
          <TabBar />
          <div className="h-[94px] shrink-0 bg-[#394550]">
            <AddressBar />
            <Bookmarks />
          </div>
          <Header />
          <div className="flex min-h-0 flex-1">
            <LeftNav />
            <Main />
          </div>
        </div>
      </div>
      <Insights />
      <Taskbar />
    </div>
  );
}
